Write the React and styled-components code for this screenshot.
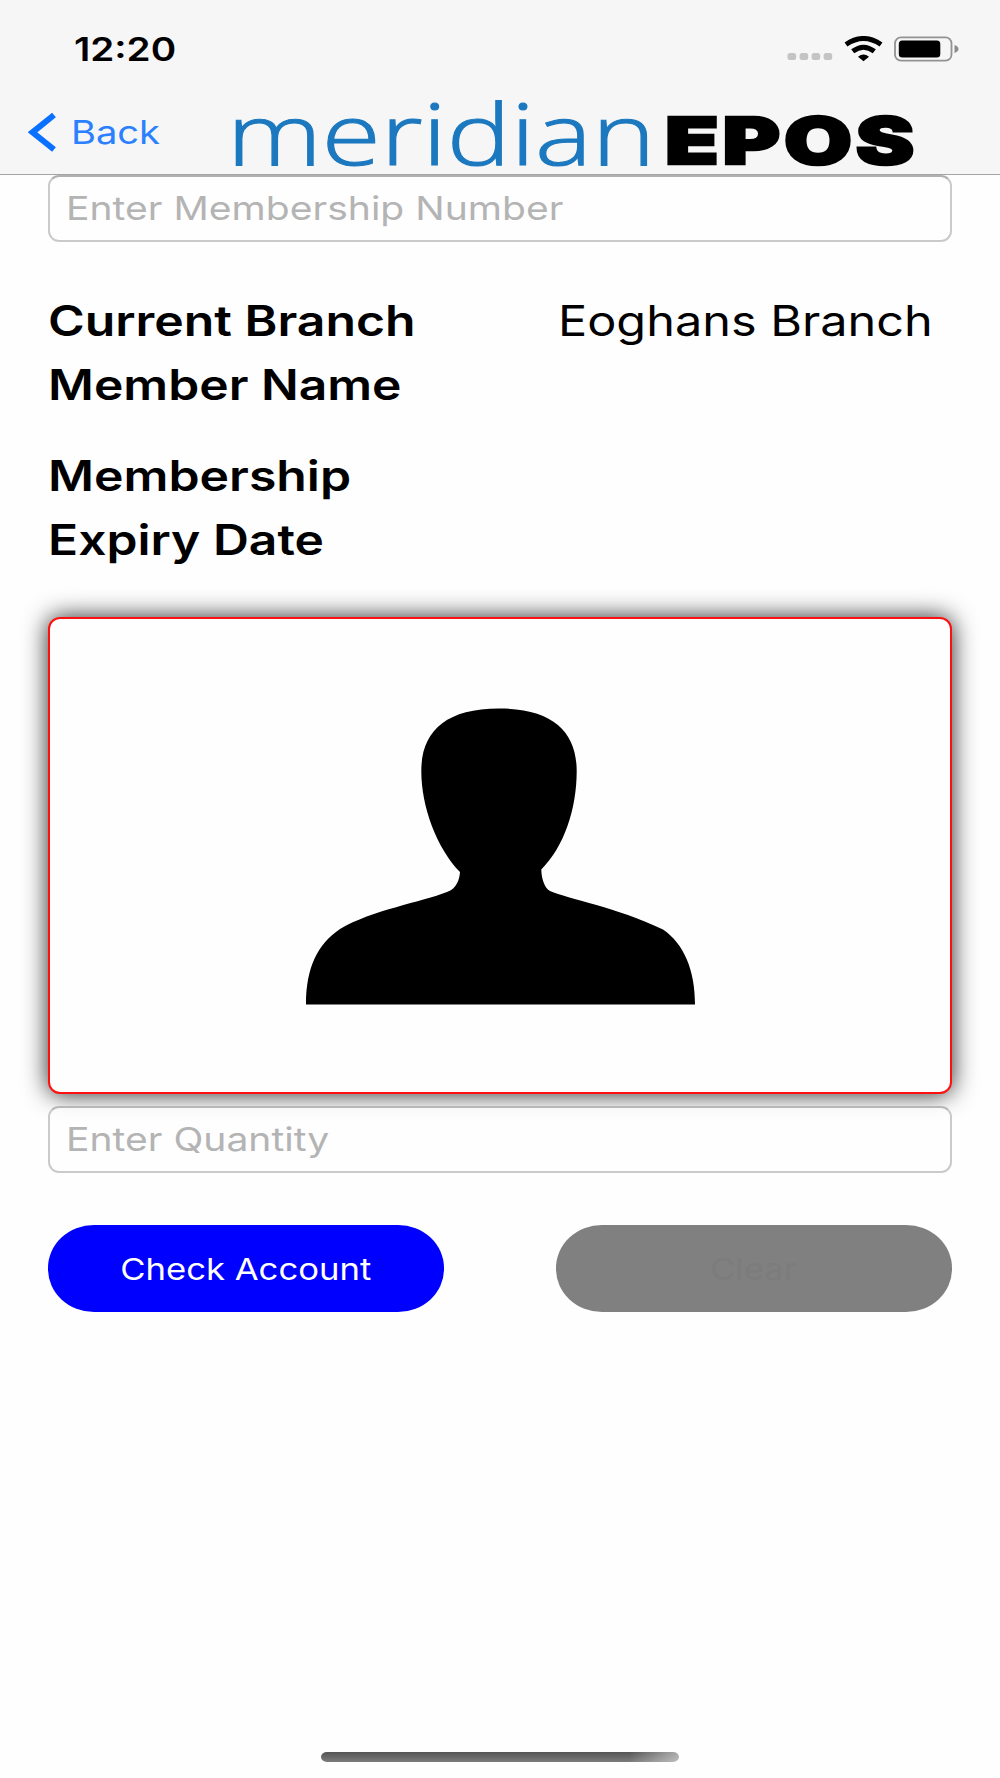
import React from 'react';
import styled, { createGlobalStyle } from 'styled-components';

const GlobalStyle = createGlobalStyle`
  body {
    margin: 0;
    background-color: #fefefe;
    font-family: Inter, 'Liberation Sans', sans-serif;
  }
`;

const Screen = styled.div`
  display: flex;
  flex-direction: column;
  width: 1000px;
  height: 1778px;
  box-sizing: border-box;
  overflow: hidden;
  background-color: #fefefe;
`;

const Header = styled.header`
  height: 175px;
  box-sizing: border-box;
  background-color: #f6f6f6;
  border-bottom: 1px solid #a6a6a6;
`;

const StatusBar = styled.div`
  display: flex;
  justify-content: space-between;
  align-items: center;
  height: 99px;
  padding: 0 41px 0 74px;
`;

const Clock = styled.div`
  padding-top: 2px;
`;

const StatusIcons = styled.div`
  display: flex;
  align-items: center;
  margin-top: -1px;
`;

const NavBar = styled.div`
  display: flex;
  align-items: center;
  height: 66px;
  padding-left: 28px;
`;

// wide system lettering
const Text = styled.span`
  display: inline-block;
  font-size: ${(p) => p.$size}px;
  font-weight: ${(p) => p.$weight || 400};
  color: ${(p) => p.$color || '#000'};
  line-height: 1.2;
  white-space: nowrap;
  transform: scaleX(${(p) => p.$stretch});
  transform-origin: ${(p) => p.$origin || 'left'} center;
`;

const BackButton = styled.button`
  display: flex;
  align-items: center;
  gap: 12px;
  width: 199px;
  padding: 2px 0 0;
  border: none;
  background: none;
  font-family: inherit;
  cursor: pointer;
`;

const Logo = styled.div`
  display: flex;
  align-items: center;
  height: 66px;
`;

const LogoName = styled.span`
  width: 438px;
  padding-bottom: 1px;
  font-family: 'Open Sans', sans-serif;
  font-size: 85px;
  font-weight: 300;
  line-height: 66px;
  color: #1c78bf;
  -webkit-text-stroke: 1.1px #1c78bf;
  white-space: nowrap;
  transform: scaleX(1.263);
  transform-origin: left center;
`;

const LogoSuffix = styled.span`
  padding-top: 18px;
  font-size: 64px;
  font-weight: 900;
  line-height: 66px;
  letter-spacing: 2.8px;
  color: #000;
  -webkit-text-stroke: 2.5px #000;
  white-space: nowrap;
  transform: scaleX(1.37);
  transform-origin: left center;
`;

const Content = styled.main`
  display: flex;
  flex-direction: column;
  padding: 0 48px;
`;

const Field = styled.input`
  width: 904px;
  height: 67px;
  box-sizing: border-box;
  padding: 0 0 2px 16px;
  border: 2px solid #cacaca;
  border-radius: 11px;
  outline: none;
  background-color: transparent;
  font-family: inherit;
  font-size: 33px;

  &::placeholder {
    color: #b4b4b4;
    opacity: 1;
    transform: scaleX(1.184);
    transform-origin: left center;
  }
`;

const NumberField = styled(Field)`
  border-top-color: #b0b0b0;
`;

const QuantityField = styled(Field)`
  margin-top: 12px;
  border-top-color: #b8b8b8;
  background-color: rgba(254, 254, 254, 0.7);
  position: relative;
`;

const Details = styled.div`
  display: grid;
  grid-template-columns: 510px 1fr;
  padding-top: 47px;
`;

const DetailRow = styled.div`
  display: grid;
  grid-template-columns: subgrid;
  grid-column: 1 / -1;
  align-items: center;
  height: ${(p) => p.$height}px;
  margin-bottom: ${(p) => p.$gap || 0}px;
`;

const PhotoCard = styled.div`
  display: flex;
  justify-content: center;
  height: 477px;
  box-sizing: border-box;
  margin-top: 44px;
  padding-top: 89px;
  padding-left: 2px;
  border: 2px solid #ff1010;
  border-radius: 12px;
  background-color: #fefefe;
  box-shadow: 0 0 25px rgba(0, 0, 0, 0.85);
`;

const Actions = styled.div`
  display: flex;
  justify-content: space-between;
  margin-top: 51.5px;
`;

const PillButton = styled.button`
  display: flex;
  justify-content: center;
  align-items: center;
  width: 396px;
  height: 87px;
  padding: 2px 0 0;
  border: none;
  border-radius: 46px / 43px;
  background-color: ${(p) => p.$bg};
  font-family: inherit;
`;

const HomeIndicator = styled.div`
  width: 358px;
  height: 10px;
  margin: auto auto 16px 321px;
  border-radius: 6px / 5px;
  background: linear-gradient(90deg, rgba(255, 255, 255, 0) 86%, rgba(255, 255, 255, 0.5) 100%),
    linear-gradient(#545454, #7c7c7c);
`;

const BackChevron = () => (
  <svg width="31" height="42" viewBox="0 0 31 42" fill="none">
    <path d="M26 3 L4.500 20.300 L26 37.500" stroke="#0a70ff" strokeWidth="6" />
  </svg>
);

const SignalDots = () => (
  <svg width="46" height="26" viewBox="0 0 46 26" fill="#c4c4c4">
    <rect x="0.5" y="17" width="8.6" height="7" rx="2.5" />
    <rect x="12.6" y="17" width="8.6" height="7" rx="2.5" />
    <rect x="24.6" y="17" width="8.6" height="7" rx="2.5" />
    <rect x="36.6" y="17" width="8.6" height="7" rx="2.5" />
  </svg>
);

const WifiIcon = styled.svg`
  margin-left: 11px;
`;

const BatteryIcon = styled.svg`
  margin-left: 11px;
`;

const Silhouette = () => (
  <svg width="390" height="298" viewBox="0 0 390 298">
    <path
      fill="#000"
      d="M0 296.500 C0 259 12 236 34 221 C66 202 116 194 141 184 C151 180.500 153.500 171 154 164 C131 140.500 115.300 99 115.300 63 C115.300 24 139 0.500 193 0.500 C247 0.500 270.700 24 270.700 63 C270.700 101 258 139 235.300 161.500 C235.500 171.500 239 180.500 244 183 C262 191 310 199 357 221.500 C378 236 389 262 389 296.500 Z"
    />
  </svg>
);

const App = () => {
  return (
    <Screen>
      <GlobalStyle />
      <Header>
        <StatusBar>
          <Clock>
            <Text $size={32} $weight={600} $stretch={1.205}>12:20</Text>
          </Clock>
          <StatusIcons>
            <SignalDots />
            <WifiIcon width="39" height="26" viewBox="0 0 39 26" fill="none" stroke="#000">
              <path d="M2 8.500 Q19.500 -3.500 37 8.500" strokeWidth="5" />
              <path d="M8.700 15.300 Q19.500 7.100 30.300 15.300" strokeWidth="5" />
              <path d="M14 20.800 Q19.500 16.300 25 20.800 L19.500 25.300 Z" fill="#000" stroke="none" />
            </WifiIcon>
            <BatteryIcon width="65" height="26" viewBox="0 0 65 26">
              <rect x="1" y="1.300" width="56.500" height="23.400" rx="6" fill="none" stroke="#929292" strokeWidth="1.800" />
              <rect x="4.800" y="4.500" width="41.500" height="17" rx="3.500" fill="#000" />
              <path d="M60.500 9 Q64.500 10.500 64.500 13 Q64.500 15.500 60.500 17 Z" fill="#8c8c8c" />
            </BatteryIcon>
          </StatusIcons>
        </StatusBar>
        <NavBar>
          <BackButton>
            <BackChevron />
            <Text $size={32} $color="#2a80ff" $stretch={1.19}>Back</Text>
          </BackButton>
          <Logo>
            <LogoName>meridian</LogoName>
            <LogoSuffix>EPOS</LogoSuffix>
          </Logo>
        </NavBar>
      </Header>
      <Content>
        <NumberField placeholder="Enter Membership Number" />
        <Details>
          <DetailRow $height={64}>
            <Text $size={42} $weight={600} $stretch={1.188}>Current Branch</Text>
            <Text $size={42} $stretch={1.157}>Eoghans Branch</Text>
          </DetailRow>
          <DetailRow $height={64} $gap={27}>
            <Text $size={42} $weight={600} $stretch={1.185}>Member Name</Text>
          </DetailRow>
          <DetailRow $height={64}>
            <Text $size={42} $weight={600} $stretch={1.188}>Membership</Text>
          </DetailRow>
          <DetailRow $height={65}>
            <Text $size={42} $weight={600} $stretch={1.185}>Expiry Date</Text>
          </DetailRow>
        </Details>
        <PhotoCard>
          <Silhouette />
        </PhotoCard>
        <QuantityField placeholder="Enter Quantity" />
        <Actions>
          <PillButton $bg="#0000ff">
            <Text $size={30} $color="#fff" $stretch={1.155} $origin="center">Check Account</Text>
          </PillButton>
          <PillButton $bg="#808080" disabled>
            <Text $size={30} $color="#7c7c7c" $stretch={1.15} $origin="center">Clear</Text>
          </PillButton>
        </Actions>
      </Content>
      <HomeIndicator />
    </Screen>
  );
};

export default App;
